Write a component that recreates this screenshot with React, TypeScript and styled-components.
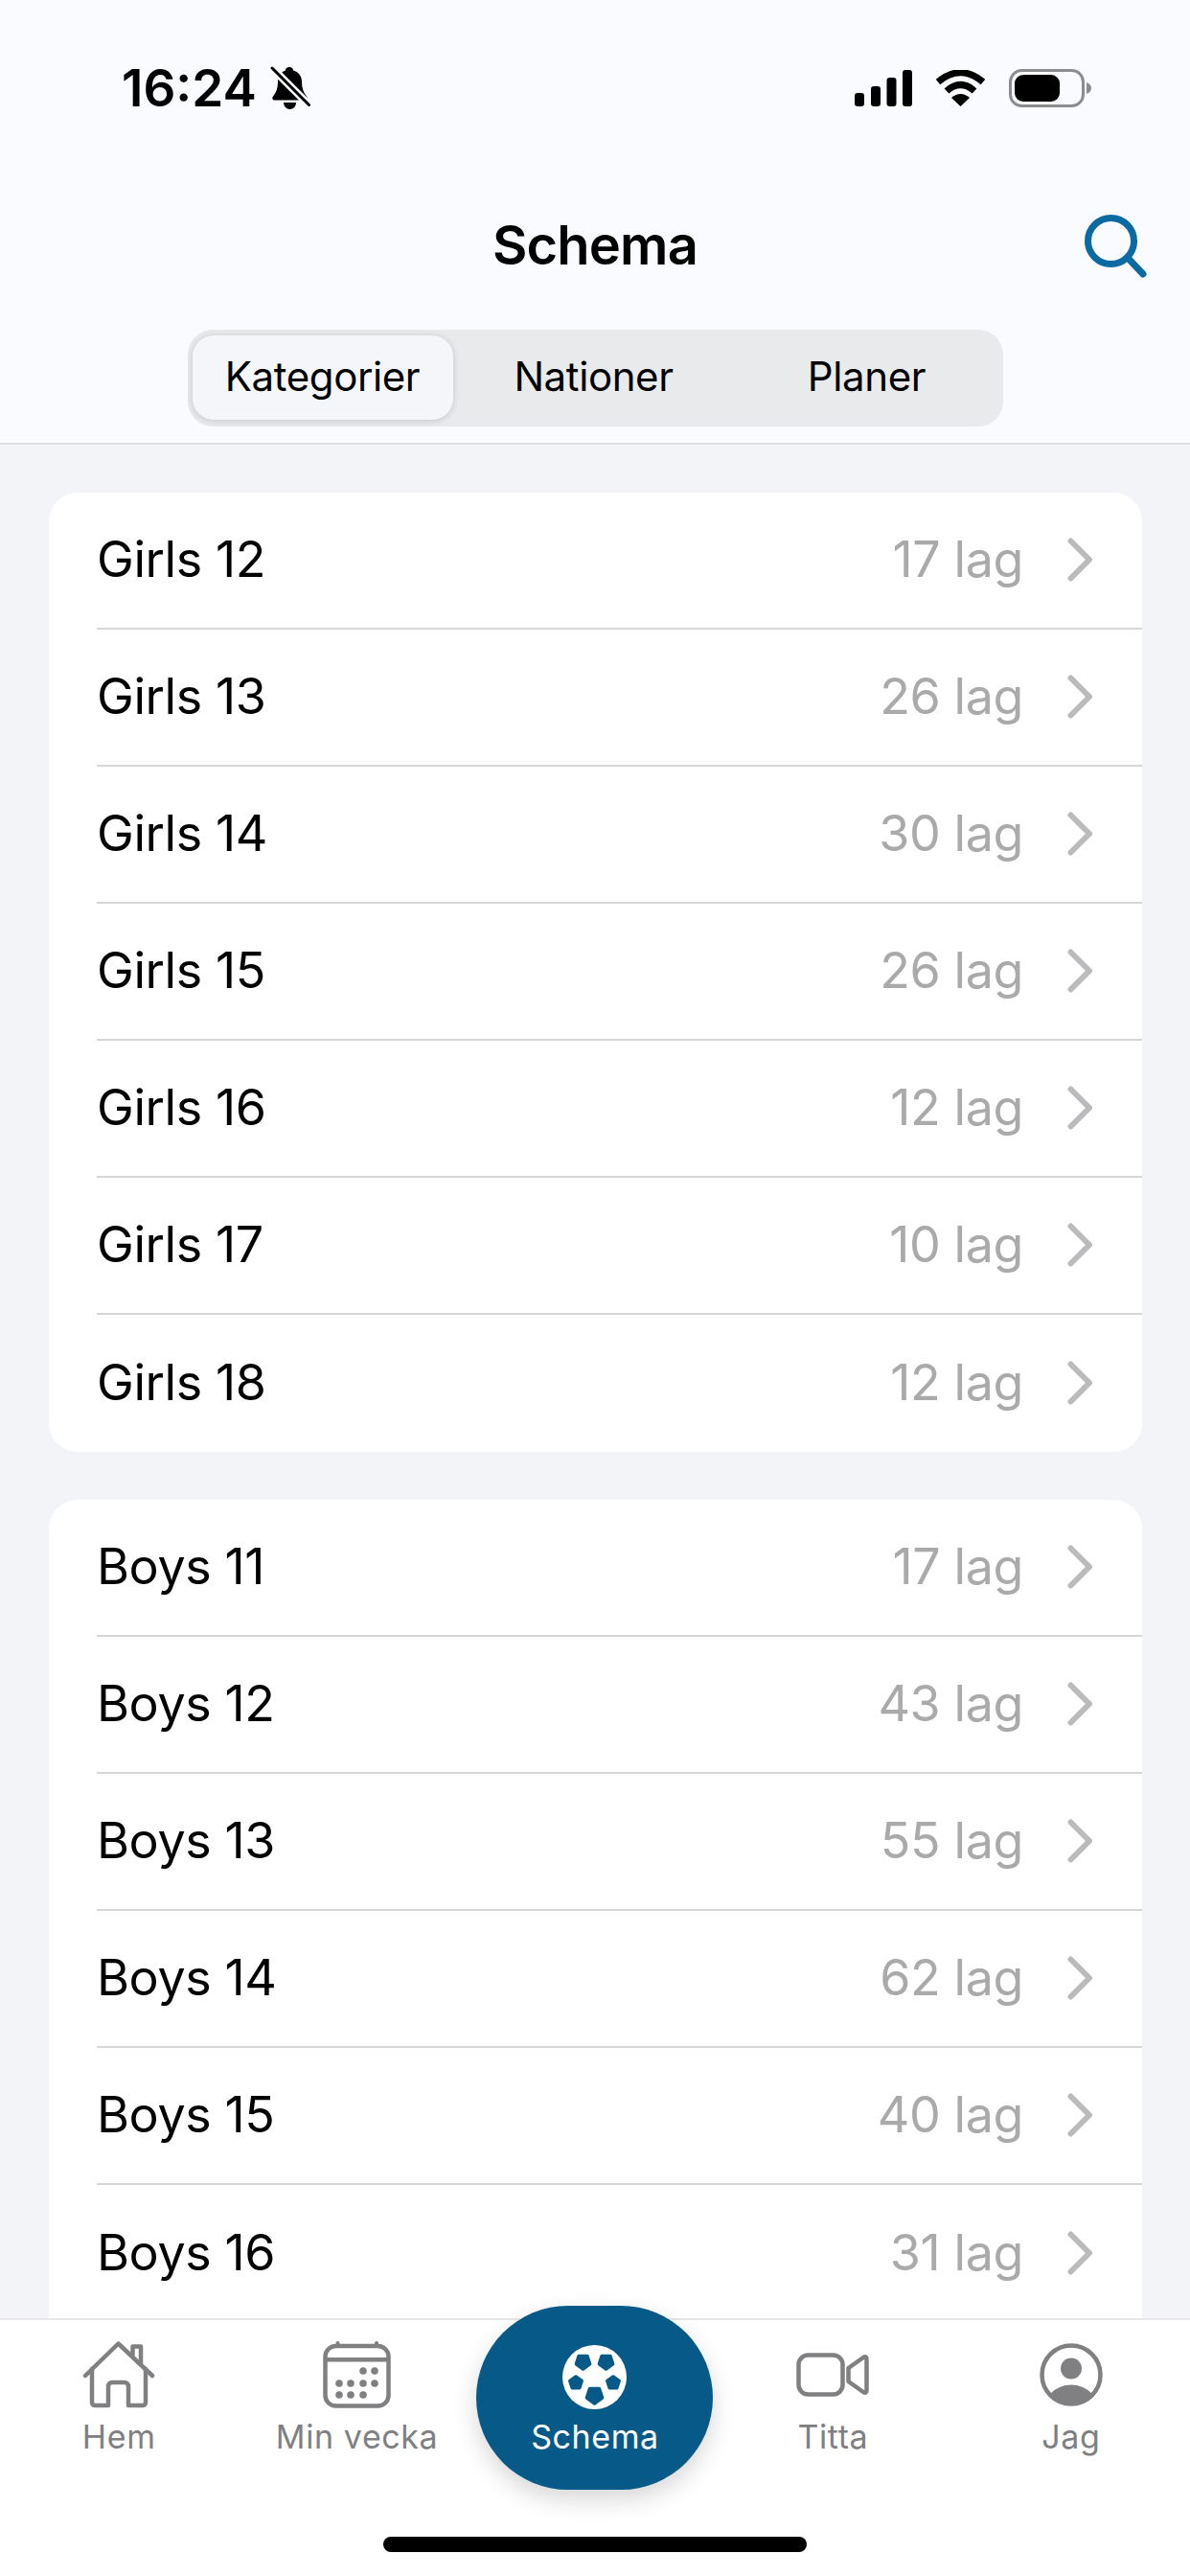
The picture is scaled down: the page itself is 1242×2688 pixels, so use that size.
import React from "react";
import styled, { createGlobalStyle } from "styled-components";

const GlobalStyle = createGlobalStyle`
  html, body {
    margin: 0;
    padding: 0;
    background: #f3f4f8;
  }
  * {
    box-sizing: border-box;
  }
`;

const Page = styled.div`
  width: 1242px;
  height: 2688px;
  display: flex;
  flex-direction: column;
  overflow: hidden;
  font-family: Inter, "Liberation Sans", sans-serif;
  background: #f3f4f8;
`;

const Header = styled.header`
  flex: none;
  height: 464px;
  background: #fafbfe;
  border-bottom: 2px solid #dcdde0;
`;

const StatusBar = styled.div`
  height: 184px;
  display: flex;
  align-items: center;
  justify-content: space-between;
  padding: 0 102px 0 127px;
`;

const StatusGroup = styled.div`
  display: flex;
  align-items: center;
  gap: 24px;
`;

const TimeGroup = styled.div`
  display: flex;
  align-items: center;
  gap: 14px;
`;

const Time = styled.span`
  font-size: 53px;
  line-height: 52px;
  font-weight: 600;
  letter-spacing: 0;
  color: #000;
`;

const TitleRow = styled.div`
  height: 144px;
  display: grid;
  grid-template-columns: 1fr auto 1fr;
  align-items: center;
  padding: 0 45px;
`;

const Title = styled.h1`
  grid-column: 2;
  margin: 0;
  font-size: 56px;
  font-weight: 600;
  letter-spacing: -0.8px;
  color: #000;
`;

const SearchButton = styled.div`
  justify-self: end;
  display: flex;
  padding-top: 2px;
`;

const Segment = styled.div`
  width: 851px;
  height: 101px;
  margin: 16px auto 0;
  padding: 6px 4px 7px 5px;
  display: grid;
  grid-template-columns: 272px 294px 1fr;
  background: #e9eaec;
  border-radius: 26px;
`;

const SegmentTab = styled.div<{ $active?: boolean }>`
  display: flex;
  align-items: center;
  justify-content: center;
  padding-bottom: 4px;
  font-size: 42px;
  letter-spacing: -0.4px;
  color: #000;
  border-radius: 22px;
  background: ${(p) => (p.$active ? "#f5f6fa" : "transparent")};
  box-shadow: ${(p) => (p.$active ? "0 1px 7px rgba(0, 0, 0, 0.16)" : "none")};
`;

const Main = styled.main`
  flex: 1;
  min-height: 0;
  overflow: hidden;
  padding: 50px 50px 0 51px;
`;

// $open: the card carries on under the tab bar
const Card = styled.section<{ $open?: boolean }>`
  background: #fff;
  border-radius: 30px;
  margin-bottom: 50px;
  padding-bottom: ${(p) => (p.$open ? "60px" : "0")};
`;

const Row = styled.div`
  height: 143px;
  margin-left: 50px;
  padding: 0 52px 2px 0;
  display: flex;
  align-items: center;
  border-bottom: 2px solid #d6d6d8;

  &:last-child {
    border-bottom: none;
  }
`;

const RowName = styled.span`
  flex: 1;
  font-size: 52px;
  letter-spacing: -0.4px;
  color: #000;
`;

const RowValue = styled.span`
  font-size: 52px;
  letter-spacing: -0.4px;
  color: #aaaaac;
  margin-right: 46px;
`;

const TabBar = styled.nav`
  flex: none;
  height: 269px;
  background: #fff;
  border-top: 2px solid #e8e8ea;
  display: grid;
  grid-template-columns: repeat(5, 1fr);
  align-items: start;
  justify-items: center;
  position: relative;
`;

const Tab = styled.div<{ $active?: boolean }>`
  display: flex;
  flex-direction: column;
  align-items: center;
  width: ${(p) => (p.$active ? "247px" : "100%")};
  height: ${(p) => (p.$active ? "192px" : "auto")};
  margin-top: ${(p) => (p.$active ? "-15px" : "0")};
  padding-top: ${(p) => (p.$active ? "39px" : "22px")};
  border-radius: 96px;
  background: ${(p) => (p.$active ? "#075a87" : "transparent")};
  box-shadow: ${(p) => (p.$active ? "0 10px 24px rgba(0, 0, 0, 0.16)" : "none")};
`;

const IconSlot = styled.div`
  height: 70px;
  display: flex;
  align-items: center;
  justify-content: center;
`;

const TabLabel = styled.span<{ $active?: boolean }>`
  margin-top: ${(p) => (p.$active ? "6px" : "8px")};
  font-size: 34px;
  line-height: 44px;
  letter-spacing: 0.6px;
  color: ${(p) => (p.$active ? "#fff" : "#808082")};
`;

const HomeIndicator = styled.div`
  position: absolute;
  left: 400px;
  bottom: 25px;
  width: 442px;
  height: 16px;
  border-radius: 8px;
  background: #000;
`;

const BellIcon = () => (
  <svg width="42" height="46" viewBox="0 0 42 46">
    <path
      d="M20 1c2.500 0 4 1.500 4 3.500 6 1.500 9 6.500 9 12 0 6 1.500 11 5 15 1.500 2 .5 4-2 4H5c-2.500 0-3.500-2-2-4 3.500-4 5-9 5-15 0-5.500 3-10.500 8-12C16 2.500 17.500 1 20 1z"
      fill="#000"
    />
    <path d="M14 38h13c0 4-3 7-6.500 7S14 42 14 38z" fill="#000" />
    <path d="M1 1l40 40" stroke="#fafbfe" strokeWidth="8" />
    <path d="M2 2l38.500 38.500" stroke="#000" strokeWidth="3" strokeLinecap="round" />
  </svg>
);

const SignalIcon = () => (
  <svg width="60" height="38" viewBox="0 0 60 38" fill="#000">
    <rect x="0" y="24" width="10" height="14" rx="3" />
    <rect x="17" y="17" width="10" height="21" rx="3" />
    <rect x="33.500" y="8" width="10" height="30" rx="3" />
    <rect x="50" y="0" width="10" height="38" rx="3" />
  </svg>
);

const WifiIcon = () => (
  <svg width="53" height="38" viewBox="0 0 53 38">
    <path d="M3 12.500Q26.500 -7 50 12.500" fill="none" stroke="#000" strokeWidth="7" />
    <path d="M12 22Q26.500 9 41 22" fill="none" stroke="#000" strokeWidth="7" />
    <path d="M17 29Q26.500 21 36 29L26.500 38Z" fill="#000" />
  </svg>
);

const BatteryIcon = () => (
  <svg width="87" height="40" viewBox="0 0 87 40">
    <rect x="1.500" y="1.500" width="76" height="37" rx="12" fill="none" stroke="#8c8c8e" strokeWidth="3" />
    <rect x="6" y="6" width="47" height="28" rx="9" fill="#000" />
    <path d="M81 14c3 1 5 3 5 6s-2 5-5 6z" fill="#8c8c8e" />
  </svg>
);

const SearchIcon = () => (
  <svg width="66" height="66" viewBox="0 0 66 66" fill="none" stroke="#0a6aa1" strokeWidth="7" strokeLinecap="round">
    <circle cx="28.500" cy="27.500" r="24" />
    <path d="M46 45l16 17" />
  </svg>
);

const Chevron = () => (
  <svg width="26" height="46" viewBox="0 0 26 46" fill="none" stroke="#bbbbbd" strokeWidth="6" strokeLinecap="round" strokeLinejoin="round">
    <path d="M3.500 3.500L23 23 3.500 42.500" />
  </svg>
);

const HomeIcon = () => (
  <svg width="76" height="70" viewBox="0 0 76 70" fill="none" stroke="#808082" strokeWidth="4.500" strokeLinecap="round" strokeLinejoin="round">
    <path d="M3 36L37.500 2.500 73 36" />
    <path d="M10 29v35a3 3 0 0 0 3 3h14V47a4 4 0 0 1 4-4h13a4 4 0 0 1 4 4v20h15a3 3 0 0 0 3-3V29" />
    <path d="M52.500 14V5.500h8.500V23" />
  </svg>
);

const CalendarIcon = () => (
  <svg width="71" height="70" viewBox="0 0 71 70" fill="#808082">
    <rect x="2.500" y="5" width="66" height="62.500" rx="11" fill="none" stroke="#808082" strokeWidth="4.500" />
    <rect x="2.500" y="17" width="66" height="4.500" />
    <rect x="13.500" y="0" width="4" height="6" rx="2" />
    <rect x="54" y="0" width="4" height="6" rx="2" />
    {[
      [42, 31],
      [54, 31],
      [17, 44],
      [29, 44],
      [42, 44],
      [54, 44],
      [17, 56],
      [29, 56],
      [42, 56],
    ].map(([cx, cy]) => (
      <circle key={`${cx}-${cy}`} cx={cx} cy={cy} r="3.800" />
    ))}
  </svg>
);

function pentagon(cx: number, cy: number, r: number, rot: number) {
  return [0, 1, 2, 3, 4]
    .map((i) => {
      const a = ((rot + i * 72 - 90) * Math.PI) / 180;
      return `${(cx + r * Math.cos(a)).toFixed(1)},${(cy + r * Math.sin(a)).toFixed(1)}`;
    })
    .join(" ");
}

const BallIcon = () => (
  <svg width="67" height="67" viewBox="0 0 67 67">
    <circle cx="33.500" cy="33.500" r="33.500" fill="#fff" />
    <g fill="#075a87" stroke="#075a87" strokeWidth="3.500" strokeLinejoin="round">
      <polygon points={pentagon(21.5, 17.5, 7.5, -36)} />
      <polygon points={pentagon(45.5, 17.5, 7.5, 36)} />
      <polygon points={pentagon(14, 39.5, 6.5, -72)} />
      <polygon points={pentagon(53, 39.5, 6.5, 72)} />
      <polygon points={pentagon(33.5, 52.5, 8.5, 180)} />
    </g>
  </svg>
);

const VideoIcon = () => (
  <svg width="76" height="46" viewBox="0 0 76 46" fill="none" stroke="#808082" strokeWidth="4.500" strokeLinejoin="round">
    <rect x="2.500" y="2.500" width="46" height="41" rx="10" />
    <path d="M54.500 16L70 5q3.500-2 3.500 2v32q0 4-3.500 2L54.500 30z" />
  </svg>
);

const AvatarIcon = () => (
  <svg width="66" height="66" viewBox="0 0 66 66" fill="#808082">
    <circle cx="33" cy="33" r="30.500" fill="none" stroke="#808082" strokeWidth="4.500" />
    <circle cx="33" cy="26.500" r="11" />
    <path d="M11 53Q20 43.500 33 43.500T55 53A30 30 0 0 1 11 53Z" />
  </svg>
);

const GIRLS = [
  ["Girls 12", "17 lag"],
  ["Girls 13", "26 lag"],
  ["Girls 14", "30 lag"],
  ["Girls 15", "26 lag"],
  ["Girls 16", "12 lag"],
  ["Girls 17", "10 lag"],
  ["Girls 18", "12 lag"],
];

const BOYS = [
  ["Boys 11", "17 lag"],
  ["Boys 12", "43 lag"],
  ["Boys 13", "55 lag"],
  ["Boys 14", "62 lag"],
  ["Boys 15", "40 lag"],
  ["Boys 16", "31 lag"],
];

const TABS = [
  { label: "Hem", icon: <HomeIcon /> },
  { label: "Min vecka", icon: <CalendarIcon /> },
  { label: "Schema", icon: <BallIcon />, active: true },
  { label: "Titta", icon: <VideoIcon /> },
  { label: "Jag", icon: <AvatarIcon /> },
];

function CategoryCard({ rows, open }: { rows: string[][]; open?: boolean }) {
  return (
    <Card $open={open}>
      {rows.map(([name, count]) => (
        <Row key={name}>
          <RowName>{name}</RowName>
          <RowValue>{count}</RowValue>
          <Chevron />
        </Row>
      ))}
    </Card>
  );
}

export default function App() {
  return (
    <Page>
      <GlobalStyle />
      <Header>
        <StatusBar>
          <TimeGroup>
            <Time>16:24</Time>
            <BellIcon />
          </TimeGroup>
          <StatusGroup>
            <SignalIcon />
            <WifiIcon />
            <BatteryIcon />
          </StatusGroup>
        </StatusBar>
        <TitleRow>
          <Title>Schema</Title>
          <SearchButton>
            <SearchIcon />
          </SearchButton>
        </TitleRow>
        <Segment>
          <SegmentTab $active>Kategorier</SegmentTab>
          <SegmentTab>Nationer</SegmentTab>
          <SegmentTab>Planer</SegmentTab>
        </Segment>
      </Header>
      <Main>
        <CategoryCard rows={GIRLS} />
        <CategoryCard rows={BOYS} open />
      </Main>
      <TabBar>
        {TABS.map((tab) => (
          <Tab key={tab.label} $active={tab.active}>
            <IconSlot>{tab.icon}</IconSlot>
            <TabLabel $active={tab.active}>{tab.label}</TabLabel>
          </Tab>
        ))}
        <HomeIndicator />
      </TabBar>
    </Page>
  );
}
